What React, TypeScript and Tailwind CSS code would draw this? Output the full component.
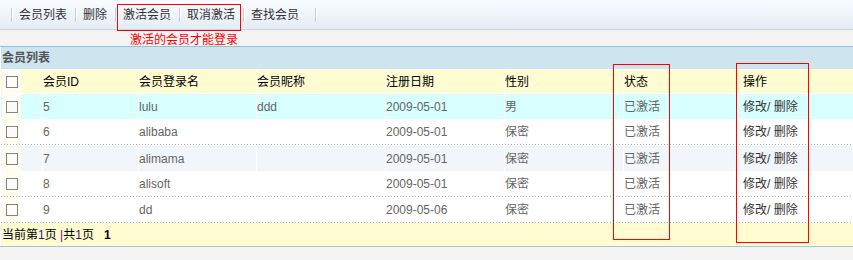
import React from "react";

type Member = {
  id: number;
  name: string;
  nick: string;
  date: string;
  sex: string;
  bg: string;
  top?: boolean;
  dotted?: boolean;
};

const members: Member[] = [
  { id: 5, name: "lulu", nick: "ddd", date: "2009-05-01", sex: "男", bg: "bg-[#d7fffe]", top: true },
  { id: 6, name: "alibaba", nick: "", date: "2009-05-01", sex: "保密", bg: "bg-white", dotted: true },
  { id: 7, name: "alimama", nick: "", date: "2009-05-01", sex: "保密", bg: "bg-[#f1f6fa]", top: true },
  { id: 8, name: "alisoft", nick: "", date: "2009-05-01", sex: "保密", bg: "bg-white", dotted: true },
  { id: 9, name: "dd", nick: "", date: "2009-05-06", sex: "保密", bg: "bg-white", dotted: true },
];

const toolItems = [
  { label: "会员列表", w: "w-[64px]" },
  { label: "删除", w: "w-[40px]" },
  { label: "激活会员", w: "w-[64px]" },
  { label: "取消激活", w: "w-[64px]" },
  { label: "查找会员", w: "w-[72px]" },
];

const cols = "grid grid-cols-[41px_96px_118px_129px_119px_119px_119px_1fr]";
const cell = "border-l border-white flex items-center whitespace-nowrap";

function Sep() {
  return <span className="w-[2px] h-[14px] border-l border-l-[#c8ced6] border-r border-r-white shrink-0" />;
}

function Checkbox() {
  return <span className="block w-[12px] h-[12px] border border-[#858585] bg-[#fbfbf7]" />;
}

function CheckCell() {
  return (
    <div className="pl-px">
      <div className="w-[19px] h-full bg-[#fdfdf1] flex items-center justify-center">
        <Checkbox />
      </div>
    </div>
  );
}

function Dotted() {
  return (
    <div className="h-px bg-[repeating-linear-gradient(to_right,#b0b0b0_0_1px,transparent_1px_3px)]" />
  );
}

export default function App() {
  return (
    <div className="relative w-[853px] h-[260px] overflow-hidden bg-[#f4f4f4] text-[12px] font-['Liberation_Sans','Noto_Sans_CJK_SC',sans-serif]">
      {/* 工具栏 */}
      <div className="h-[30px] border-b border-[#c5d5e5] bg-linear-to-b from-[#f9fcff] to-[#e4ecf5] flex items-center pl-[11px] text-[#333]">
        {toolItems.map((t) => (
          <div key={t.label} className={`${t.w} flex items-center`}>
            <Sep />
            <span className="ml-[6px] leading-[14px]">{t.label}</span>
          </div>
        ))}
        <Sep />
      </div>

      {/* 提示 */}
      <div className="h-[16px] overflow-hidden pl-[130px] pt-[2px] leading-[16px] text-[#ff0000]">
        激活的会员才能登录
      </div>
      <div className="h-px bg-[#8cc1df]" />

      {/* 会员列表 */}
      <div className="bg-white pl-px">
        <div className="h-[22px] bg-[#cee4ef] flex items-center pl-px font-bold text-[#555]">
          会员列表
        </div>

        <div className={`${cols} h-[24px] border-t border-white bg-[#fffcd2] text-black`}>
          <CheckCell />
          <div className={cell}>会员ID</div>
          <div className={cell}>会员登录名</div>
          <div className={cell}>会员昵称</div>
          <div className={cell}>注册日期</div>
          <div className={cell}>性别</div>
          <div className={cell}>状态</div>
          <div className={cell}>操作</div>
        </div>

        {members.map((m) => (
          <React.Fragment key={m.id}>
            {m.top && <div className="h-px bg-white" />}
            <div className={`${cols} h-[25px] ${m.bg} text-[#666]`}>
              <CheckCell />
              <div className={cell}>{m.id}</div>
              <div className={cell}>{m.name}</div>
              <div className={cell}>{m.nick}</div>
              <div className={cell}>{m.date}</div>
              <div className={cell}>{m.sex}</div>
              <div className={cell}>已激活</div>
              <div className={`${cell} text-[#333]`}>修改/ 删除</div>
            </div>
            {m.dotted && <Dotted />}
          </React.Fragment>
        ))}

        <div className="h-[23px] bg-[#fffcd2] flex items-center pl-px text-black whitespace-pre">
          <span>当前第</span>
          <span className="text-[#401088]">1</span>
          <span>页 </span>
          <span className="text-[#800080]">|</span>
          <span>共</span>
          <span className="text-[#401088]">1</span>
          <span>页</span>
          <span className="ml-[10px] font-bold">1</span>
        </div>
      </div>
      <div className="h-px bg-[#a3c4dd]" />

      {/* 标注框 */}
      <div className="absolute left-[117px] top-[4px] w-[124px] h-[27px] border border-[#ff0000]" />
      <div className="absolute left-[613px] top-[64px] w-[57px] h-[176px] border border-[#ff0000]" />
      <div className="absolute left-[736px] top-[63px] w-[73px] h-[180px] border border-[#ff0000]" />
    </div>
  );
}
